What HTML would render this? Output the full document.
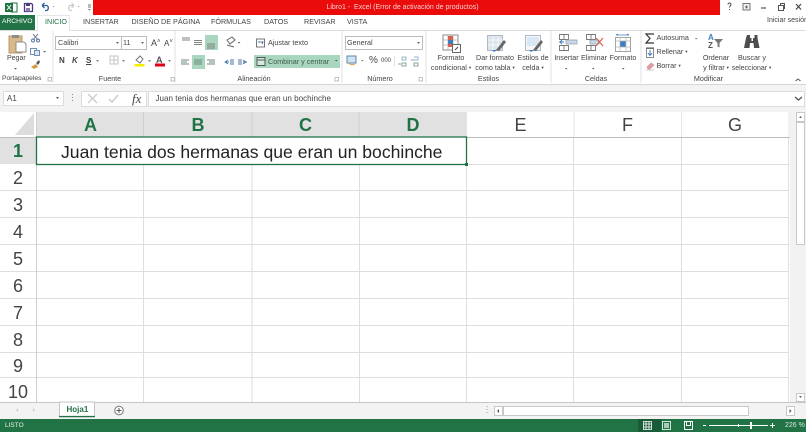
<!DOCTYPE html>
<html><head><meta charset="utf-8"><style>
*{box-sizing:border-box}
html,body{margin:0;padding:0;width:806px;height:432px;overflow:hidden;background:#fff}
body{position:relative;font-family:"Liberation Sans",sans-serif;color:#444}
.t{position:absolute;white-space:nowrap;font-size:7.2px;line-height:10px;color:#444}
.c{text-align:center;transform:translateX(-50%)}
.b{position:absolute}
svg{position:absolute;left:0;top:0}
.hd{position:absolute;font-size:18px;line-height:24px;color:#444;text-align:center;transform:translateX(-50%)}
.hs{color:#217346;font-weight:bold}
.a{font-size:4.500px;vertical-align:1px}
</style></head><body>
<div class="b" style="left:93px;top:0;width:627px;height:15px;background:#ea0b0b"></div>
<div class="t c" style="left:402.500px;top:3px;color:#f6d0d0;font-size:7px">Libro1 - &nbsp;Excel (Error de activación de productos)</div>
<div class="b" style="left:0;top:15px;width:35px;height:15px;background:#217346"></div>
<div class="t" style="left:2px;top:17px;color:#fff;font-size:6.700px">ARCHIVO</div>
<div class="b" style="left:37px;top:15px;width:33px;height:16px;background:#fff;border:1px solid #e6e6e6;border-bottom:0;z-index:2"></div>
<div class="t" style="left:45px;top:17px;color:#217346;z-index:3">INICIO</div>
<div class="t" style="left:83px;top:17px">INSERTAR</div>
<div class="t" style="left:131.500px;top:17px">DISEÑO DE PÁGINA</div>
<div class="t" style="left:211px;top:17px">FÓRMULAS</div>
<div class="t" style="left:264px;top:17px">DATOS</div>
<div class="t" style="left:304px;top:17px">REVISAR</div>
<div class="t" style="left:347px;top:17px">VISTA</div>
<div class="t" style="left:767px;top:16px;font-size:7px">Iniciar sesión</div>

<div class="b" style="left:0;top:30px;width:806px;height:55px;background:#fff;border-top:1px solid #dcdcdc;border-bottom:1px solid #d6d6d6"></div>
<div class="b" style="left:0;top:85px;width:806px;height:27px;background:#f3f3f3"></div>

<svg width="806" height="432" viewBox="0 0 806 432" fill="none" style="z-index:1">
<!-- QAT -->
<rect x="11" y="3" width="6" height="9" fill="#fff" stroke="#217346"/>
<rect x="5" y="3" width="8" height="9" fill="#217346"/>
<path d="M7 5l4 5M11 5l-4 5" stroke="#fff"/>
<path d="M24.500 3.500h7l1 1v7h-8z" fill="#fff" stroke="#4b3a7a" stroke-width="1.300"/><rect x="26" y="3" width="4" height="3" fill="#4b3a7a"/><rect x="26" y="8" width="4" height="3.500" fill="#8a7fb0"/>
<path d="M42 5.500h5a3 3 0 0 1 0 5h-2M42 5.500l2.500-2.500M42 5.500l2.500 2.500" stroke="#2f5f9a" stroke-width="1.300"/>
<path d="M53 6h1.500l-.8 1zM78 6h1.500l-.8 1z" fill="#666"/>
<path d="M74 5.500h-4a3 3 0 0 0 0 5h2M74 5.500l-2.500-2.500M74 5.500l-2.500 2.500" stroke="#c9c9c9" stroke-width="1.200"/>
<path d="M88 5h3M88 7h3" stroke="#777"/><path d="M88 9h3l-1.500 1.500z" fill="#777"/>
<!-- Window controls -->
<path d="M728 4.500c0-2 3-2 3 0 0 1.500-1.500 1.500-1.500 3M729.500 9v1" stroke="#555"/>
<rect x="743" y="3.500" width="7" height="6.500" fill="#f0f0f0" stroke="#777"/><path d="M745 7h3M746.500 5.500v3" stroke="#666"/>
<path d="M761 8h5" stroke="#555" stroke-width="1.200"/>
<rect x="778.500" y="5.500" width="5" height="5" stroke="#555"/><path d="M780.500 5.500v-2h4v5h-1" stroke="#555"/>
<path d="M796 4l5 5.500M801 4l-5 5.500" stroke="#444" stroke-width="1.200"/>
<!-- Clipboard -->
<rect x="9" y="36" width="13" height="17" fill="#d9b88a" stroke="#b89a6c"/><rect x="12" y="35" width="7" height="3" fill="#8c8c8c"/><path d="M16 42h8l2 2v8H16z" fill="#fff" stroke="#8c8c8c"/>
<path d="M33 34l5 6M38 34l-5 6" stroke="#7b8794"/><circle cx="33" cy="40.500" r="1.500" stroke="#5a7da8"/><circle cx="38" cy="40.500" r="1.500" stroke="#5a7da8"/>
<rect x="30.500" y="48.500" width="6" height="6" fill="#fff" stroke="#6d8fb5"/><rect x="34.500" y="50.500" width="5" height="5" fill="#dbe6f2" stroke="#6d8fb5"/>
<path d="M43 51h3l-1.500 1.500z" fill="#555"/>
<path d="M31 67l5-3 2 3-4 2z" fill="#d39a45"/><path d="M36 63l3-3 1 2-2 3z" fill="#555"/>
<path d="M14 68h3l-1.500 1.500z" fill="#555"/>
<path d="M48 77.500h3.500v3.500h-3.500z" stroke="#aaa" stroke-width=".7"/>
<path d="M53 31v52M175 31v52M342 31v52M426 31v52M551 31v52M641 31v52" stroke="#e2e2e2"/>
<!-- Font -->
<rect x="55.500" y="36.500" width="91" height="13" fill="#fff" stroke="#bdbdbd"/><path d="M121.500 36v13" stroke="#bdbdbd"/>
<path d="M116 42h3l-1.500 2zM141 42h3l-1.500 2z" fill="#666"/>
<path d="M96 60h3l-1.500 2zM122 60h3l-1.500 2zM148 60h3l-1.500 2zM168 60h3l-1.500 2z" fill="#888"/>
<path d="M110 56h8v8h-8zM114 56v8M110 60h8" stroke="#c4c4c4"/>
<path d="M136 60l4-4 3 3-3 4z" fill="#fff" stroke="#777"/><rect x="134.500" y="64" width="10" height="2.500" fill="#f4ee00"/>
<rect x="155" y="63.500" width="10" height="3" fill="#e3001b"/>
<!-- Alignment -->
<rect x="205" y="35" width="13" height="15" fill="#a9d6bf"/><rect x="192" y="55" width="13" height="14" fill="#a9d6bf"/>
<rect x="254" y="55" width="86" height="13" fill="#a9d6bf"/>
<path d="M182 38h8M182 40h8M194 40.500h8M194 42.500h8M194 44.500h8M207 44h8M207 46h8M207 48h8" stroke="#808080" stroke-width=".9"/>
<path d="M181 60h8M181 62h6M181 64h8M194 60h8M194 62h8M194 64h8M207 60h8M209 62h6M207 64h8" stroke="#6f8a7e" stroke-width=".9"/>
<path d="M228 60l-3 2 3 2M230 60h4M230 62h4M230 64h4M225 62h4" stroke="#4a76a8" stroke-width=".9"/>
<path d="M243 60l3 2-3 2M238 60h4M238 62h4M238 64h4M243 62h4" stroke="#4a76a8" stroke-width=".9"/>
<path d="M227 40l5-3 3 3-5 4zM227 45l7 2" stroke="#666"/><path d="M237.500 42h3l-1.500 1.500z" fill="#666"/>
<rect x="256.500" y="39" width="8" height="8" fill="#fff" stroke="#777"/><path d="M258 42h5l-1 2" stroke="#4a76a8"/>
<rect x="257" y="57.500" width="8" height="8" fill="#d4ecdf" stroke="#555"/><path d="M257 60h8" stroke="#555"/>
<path d="M335 60h2.500l-1.250 1.500z" fill="#444"/>
<path d="M335 77.500h3.500v3.500h-3.500zM419 77.500h3.500v3.500h-3.500zM171 77.500h3.500v3.500h-3.500z" stroke="#aaa" stroke-width=".7"/>
<!-- Number -->
<rect x="345.500" y="36.500" width="77" height="13" fill="#fff" stroke="#bdbdbd"/><path d="M417 42h3l-1.500 2z" fill="#666"/>
<rect x="347" y="56" width="9" height="7" fill="#cfe3f4" stroke="#5f87ad"/><path d="M349 63c1 2 4 2 6 1" stroke="#d9a83a"/><path d="M361 60h2.500l-1.250 1.500z" fill="#777"/>
<path d="M394.500 56v10" stroke="#e2e2e2"/>
<path d="M402 57h4v3h-4zM414 57h4v3h-4" stroke="#7aa0c2" stroke-width=".8"/><path d="M402 63h4v3h-4zM414 63h4v3h-4z" stroke="#6f8f76" stroke-width=".8"/><path d="M398 64h3M411 60h3" stroke="#5b84ad" stroke-width=".8"/>
<!-- Styles -->
<rect x="443" y="35" width="15" height="15" fill="#fff" stroke="#8c8c8c"/>
<path d="M448 35v15M453 35v15M443 40h15M443 45h15" stroke="#b5b5b5" stroke-width=".8"/>
<rect x="448" y="36" width="5" height="4" fill="#d9604a"/><rect x="448" y="40" width="5" height="4" fill="#3f7cc4"/><rect x="448" y="44" width="5" height="3" fill="#d9604a"/>
<rect x="452.500" y="44.500" width="8" height="8" fill="#fff" stroke="#666"/><path d="M455 50l3-3" stroke="#444"/>
<rect x="487.500" y="35.500" width="15" height="15" fill="#dce4ee" stroke="#aeb9c6"/><path d="M493 36v14M498 36v14M488 40h15M488 45h15" stroke="#fff" stroke-width=".7"/><path d="M496 50l8-10 2 2-7 9z" fill="#666"/><path d="M492 50h5l-3 2z" fill="#3f7cc4"/>
<rect x="525.500" y="35.500" width="15" height="15" fill="#f7f7f7" stroke="#aeb9c6"/><rect x="527" y="37" width="12" height="9" fill="#d9e8f3"/><path d="M533 50l8-10 2 2-7 9z" fill="#666"/><path d="M529 50h5l-3 2z" fill="#3f7cc4"/>
<!-- Cells -->
<path d="M559.500 34.500h9v5h-9zM559.500 45.500h9v5h-9zM564 34.500v5M564 45.500v5" stroke="#777" stroke-width=".9"/><rect x="566" y="40" width="11" height="4" fill="#c9d7e6" stroke="#8a9aac" stroke-width=".7"/><path d="M559 42h5M562 40l-2 2 2 2" stroke="#3f7cc4"/>
<path d="M586.500 34.500h9v5h-9zM586.500 45.500h9v5h-9zM591 34.500v5M591 45.500v5" stroke="#777" stroke-width=".9"/><rect x="590" y="40" width="9" height="4" fill="#c9d7e6" stroke="#8a9aac" stroke-width=".7"/><path d="M596 38l7 8M603 38l-7 8" stroke="#d9533f"/>
<rect x="615.500" y="37.500" width="15" height="14" fill="#fff" stroke="#9ba7a0"/><rect x="620" y="41" width="6" height="6" fill="#3f7cc4"/><path d="M620 37v14M626 37v14M615 41h15M615 47h15" stroke="#b5b5b5" stroke-width=".7"/><path d="M616 35h13M616 35l2-1M629 35l-2-1" stroke="#3f7cc4" stroke-width=".8"/>
<path d="M565 68h2.500l-1.250 1.500zM592 68h2.500l-1.250 1.500zM622 68h2.500l-1.250 1.500z" fill="#555"/>
<!-- Editing -->
<path d="M654 34h-8l4 4.500-4 4.500h8" stroke="#333" stroke-width="1.200"/>
<rect x="646.500" y="48.500" width="7" height="9" fill="#fff" stroke="#8a8a8a"/><path d="M650 50v5M648 53l2 2.500 2-2.500" stroke="#3f7cc4"/><path d="M646 48h8" stroke="#555"/>
<path d="M647 67l4-4 3 2-4 4h-2z" fill="#e79aa6" stroke="#c9a0a0" stroke-width=".7"/><path d="M646 70h8" stroke="#ccc"/>
<path d="M695 38h2.500l-1.250 1.500z" fill="#777"/>
<path d="M714 39h9l-3.500 4v4.500l-2-1V43z" fill="#777"/>
<path d="M747 35h3v3h1.500v3h1.500v-3h1.500v-3h3v3l2 10h-5.500l-.5-5h-3.500l-.5 5h-5.500l2-10z" fill="#4d4d4d"/>
<path d="M795.500 81l2.500-2 2.500 2" stroke="#555"/>
<!-- Formula bar -->
<rect x="3.500" y="91.500" width="60" height="14" fill="#fff" stroke="#dcdcdc"/><path d="M56 97h3l-1.500 2z" fill="#555"/>
<path d="M72.500 94v1M72.500 97v1M72.500 100v1" stroke="#888"/>
<rect x="81.500" y="91.500" width="65" height="15" fill="#fff" stroke="#dcdcdc"/>
<path d="M88 94l9 9M97 94l-9 9" stroke="#cdcdcd" stroke-width="1.300"/><path d="M109 99l3 3 6-7" stroke="#cdcdcd" stroke-width="1.500"/>
<rect x="148.500" y="91.500" width="656" height="15" fill="#fff" stroke="#dcdcdc"/>
<path d="M795 97l3.500 3 3.500-3" stroke="#555" stroke-width="1.300"/>
<!-- Headers -->
<path d="M15 135l19-22v22z" fill="#dcdcdc"/>
<rect x="36" y="112" width="430" height="25" fill="#e1e1e1"/>
<rect x="0" y="137" width="36" height="27" fill="#e1e1e1"/>
<path d="M143.500 112v25M252 112v25M359 112v25" stroke="#cfcfcf"/>
<path d="M466.500 112v25M574 112v25M681.500 112v25M789 112v25" stroke="#e6e6e6"/>
<!-- Grid -->
<path d="M36.500 137v265M143.500 164v238M252 164v238M359.500 164v238M466.500 137v265M573.500 137v265M681.500 137v265M788.500 137v265" stroke="#dedede"/>
<path d="M36 164.500h753M0 190.500h789M0 217.500h789M0 244.500h789M0 271.500h789M0 298.500h789M0 325.500h789M0 352.500h789M0 377.500h789" stroke="#dedede"/>
<path d="M0 137.500h36M466 137.500h329" stroke="#bdbdbd"/>
<path d="M36.500 112v290" stroke="#cfcfcf"/>
<rect x="36.500" y="137" width="430" height="27.500" stroke="#217346" stroke-width="1.300"/>
<rect x="465" y="163" width="3" height="3" fill="#217346"/>
<!-- Scrollbar -->
<rect x="790" y="112" width="16" height="290" fill="#f2f2f2"/>
<rect x="796.500" y="112.500" width="8" height="9" fill="#fff" stroke="#c8c8c8"/><path d="M799 118l1.500-2 1.500 2z" fill="#666"/>
<rect x="796.500" y="122.500" width="8" height="122" fill="#fff" stroke="#c8c8c8"/>
<rect x="796.500" y="393.500" width="8" height="8" fill="#fff" stroke="#c8c8c8"/><path d="M799 396l1.500 2 1.500-2z" fill="#666"/>
<!-- Tabs -->
<rect x="0" y="402" width="806" height="17" fill="#f3f3f3"/>
<path d="M0 402.500h806" stroke="#c6c6c6"/>
<path d="M16 410l2-1.500v3zM33 408.500l2 1.500-2 1.500z" fill="#c4c4c4"/>
<rect x="59.500" y="402" width="35" height="15" fill="#fff" stroke="#c6c6c6"/><path d="M59 416.500h36" stroke="#217346" stroke-width="1.300"/>
<circle cx="119" cy="410.500" r="4.300" fill="#fff" stroke="#777"/><path d="M116.500 410.500h5M119 408v5" stroke="#555"/>
<rect x="503.500" y="406.500" width="245" height="9" fill="#fff" stroke="#c8c8c8"/>
<rect x="786.500" y="406.500" width="8" height="9" fill="#fff" stroke="#c8c8c8"/><path d="M789.500 409l2 2-2 2z" fill="#555"/>
<rect x="494.500" y="406.500" width="8" height="9" fill="#fff" stroke="#c8c8c8"/><path d="M499 409l-2 2 2 2z" fill="#555"/>
<path d="M487 406v1M487 409v1M487 412v1" stroke="#999"/>
<!-- Status -->
<rect x="0" y="419" width="806" height="13" fill="#217346"/>
<rect x="638" y="419" width="23" height="13" fill="#1a5c38"/>
<path d="M643.500 421.500h8v8h-8zM646 421.500v8M649 421.500v8M643.500 424h8M643.500 427h8" stroke="#fff" stroke-width=".8"/>
<rect x="662.500" y="421.500" width="8" height="8" stroke="#cfe3d8"/><rect x="664" y="423" width="5" height="5" fill="#a9cbb8"/>
<rect x="684.500" y="421.500" width="8" height="8" stroke="#fff"/><path d="M686.500 422v3.500h4V422" stroke="#fff"/>
<path d="M703 425.500h3M709 425.500h59M770 425.500h5M772.500 423v5M738.500 424v3" stroke="#fff"/>
<rect x="750" y="422" width="2" height="7" fill="#fff"/>
</svg>

<div style="position:absolute;inset:0;z-index:2">
<div class="t" style="left:7px;top:53.700px;font-size:7px">Pegar</div>
<div class="t" style="left:2px;top:74px;font-size:6.700px">Portapapeles</div>
<div class="t c" style="left:110px;top:74px">Fuente</div>
<div class="t c" style="left:254px;top:74px">Alineación</div>
<div class="t c" style="left:380px;top:74px">Número</div>
<div class="t c" style="left:488.500px;top:74px">Estilos</div>
<div class="t c" style="left:596px;top:74px">Celdas</div>
<div class="t c" style="left:708.500px;top:74px">Modificar</div>
<div class="t" style="left:58px;top:38px">Calibri</div>
<div class="t" style="left:123px;top:38px">11</div>
<div class="t" style="left:151px;top:37px;font-size:9px">A<span style="font-size:6px;vertical-align:3px">˄</span></div>
<div class="t" style="left:164px;top:37px;font-size:8px">A<span style="font-size:6px;vertical-align:3px">˅</span></div>
<div class="t" style="left:59px;top:56px;font-weight:bold;font-size:8px">N</div>
<div class="t" style="left:72px;top:56px;font-style:italic;font-weight:bold;font-size:8px">K</div>
<div class="t" style="left:86px;top:56px;font-weight:bold;font-size:8px;text-decoration:underline">S</div>
<div class="t" style="left:156px;top:55px;font-weight:bold;font-size:9px;color:#555">A</div>
<div class="t" style="left:268px;top:38px">Ajustar texto</div>
<div class="t" style="left:268px;top:56.500px;color:#3f5a4c">Combinar y centrar</div>
<div class="t" style="left:347px;top:38px">General</div>
<div class="t" style="left:369px;top:56px;font-size:10px">%</div>
<div class="t" style="left:381px;top:56px;font-size:6px">000</div>
<div class="t c" style="left:451px;top:53px">Formato</div>
<div class="t c" style="left:451px;top:63px">condicional <span class="a">▾</span></div>
<div class="t c" style="left:495px;top:53px">Dar formato</div>
<div class="t c" style="left:495px;top:63px">como tabla <span class="a">▾</span></div>
<div class="t c" style="left:533px;top:53px">Estilos de</div>
<div class="t c" style="left:533px;top:63px">celda <span class="a">▾</span></div>
<div class="t c" style="left:566.500px;top:53px">Insertar</div>
<div class="t c" style="left:594px;top:53px">Eliminar</div>
<div class="t c" style="left:623px;top:53px">Formato</div>
<div class="t" style="left:656.500px;top:33px">Autosuma</div>
<div class="t" style="left:656.500px;top:47px">Rellenar <span class="a">▾</span></div>
<div class="t" style="left:656.500px;top:61px">Borrar <span class="a">▾</span></div>
<div class="t c" style="left:716px;top:53px">Ordenar</div>
<div class="t c" style="left:716px;top:63px">y filtrar <span class="a">▾</span></div>
<div class="t c" style="left:752px;top:53px">Buscar y</div>
<div class="t c" style="left:751.500px;top:63px;font-size:7px">seleccionar <span class="a">▾</span></div>
<div class="t" style="left:708px;top:33px;color:#3f7cc4;font-weight:bold;font-size:8px">A</div>
<div class="t" style="left:708px;top:41px;color:#555;font-weight:bold;font-size:8px">Z</div>
<div class="t" style="left:7px;top:94px;font-size:8px">A1</div>
<div class="t" style="left:132px;top:91px;font-family:'Liberation Serif',serif;font-style:italic;font-size:13px;line-height:15px">fx</div>
<div class="t" style="left:155.500px;top:94px;font-size:8.100px">Juan tenia dos hermanas que eran un bochinche</div>

<div class="hd hs" style="left:90.500px;top:113px">A</div>
<div class="hd hs" style="left:198px;top:113px">B</div>
<div class="hd hs" style="left:305.500px;top:113px">C</div>
<div class="hd hs" style="left:413px;top:113px">D</div>
<div class="hd" style="left:520.500px;top:113px">E</div>
<div class="hd" style="left:627.500px;top:113px">F</div>
<div class="hd" style="left:735px;top:113px">G</div>
<div class="hd hs" style="left:18px;top:139px">1</div>
<div class="hd" style="left:18px;top:166px">2</div>
<div class="hd" style="left:18px;top:193px">3</div>
<div class="hd" style="left:18px;top:220px">4</div>
<div class="hd" style="left:18px;top:247px">5</div>
<div class="hd" style="left:18px;top:274px">6</div>
<div class="hd" style="left:18px;top:301px">7</div>
<div class="hd" style="left:18px;top:328px">8</div>
<div class="hd" style="left:18px;top:354px">9</div>
<div class="hd" style="left:18px;top:380px">10</div>
<div class="t" style="left:61px;top:139px;font-size:17.600px;line-height:26px;color:#222">Juan tenia dos hermanas que eran un bochinche</div>
<div class="t" style="left:66.500px;top:405px;color:#217346;font-weight:bold;font-size:8px">Hoja1</div>
<div class="t" style="left:5px;top:420.500px;color:#e8f2ec;font-size:6.500px">LISTO</div>
<div class="t" style="left:785px;top:420.500px;color:#d8e8df;font-size:7px">226 %</div>
</div>
</body></html>
